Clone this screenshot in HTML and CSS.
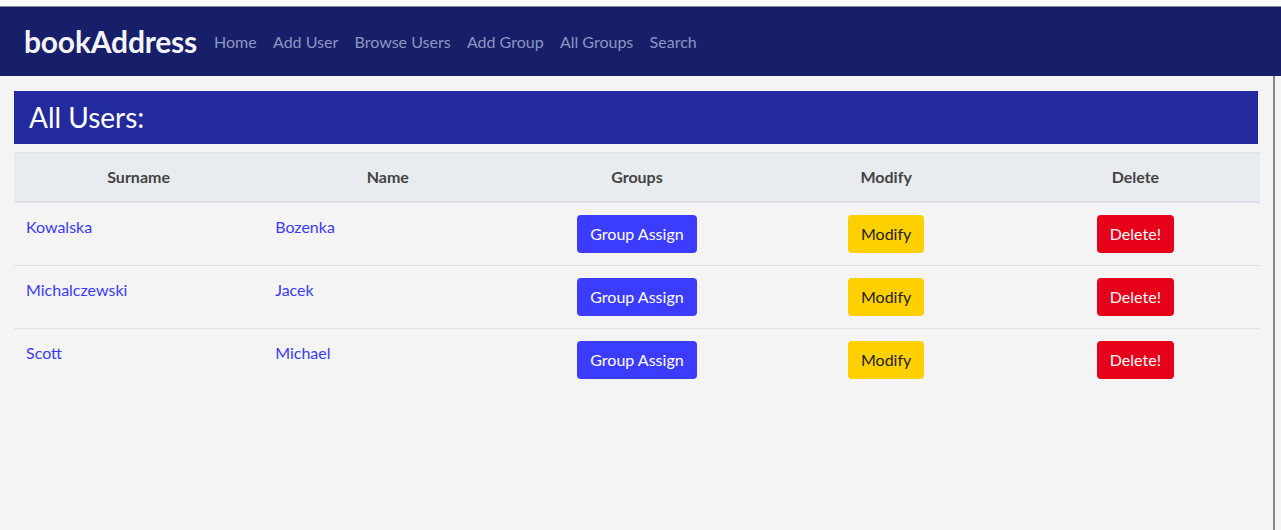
FILE: index.html
```html
<!DOCTYPE html>
<html>
<head>
<meta charset="utf-8">
<link rel="stylesheet" href="styles.css">
</head>
<body>
<div class="frame">
  <nav class="navbar">
    <a class="brand" href="#">bookAddress</a>
    <ul class="nav">
      <li><a href="#">Home</a></li>
      <li><a href="#">Add User</a></li>
      <li><a href="#">Browse Users</a></li>
      <li><a href="#">Add Group</a></li>
      <li><a href="#">All Groups</a></li>
      <li><a href="#">Search</a></li>
    </ul>
  </nav>
  <main class="content">
    <h1 class="title">All Users:</h1>
    <table class="users">
      <thead>
        <tr><th>Surname</th><th>Name</th><th>Groups</th><th>Modify</th><th>Delete</th></tr>
      </thead>
      <tbody>
        <tr>
          <td><a href="#">Kowalska</a></td>
          <td><a href="#">Bozenka</a></td>
          <td class="c"><button class="btn btn-blue">Group Assign</button></td>
          <td class="c"><button class="btn btn-yellow">Modify</button></td>
          <td class="c"><button class="btn btn-red">Delete!</button></td>
        </tr>
        <tr>
          <td><a href="#">Michalczewski</a></td>
          <td><a href="#">Jacek</a></td>
          <td class="c"><button class="btn btn-blue">Group Assign</button></td>
          <td class="c"><button class="btn btn-yellow">Modify</button></td>
          <td class="c"><button class="btn btn-red">Delete!</button></td>
        </tr>
        <tr>
          <td><a href="#">Scott</a></td>
          <td><a href="#">Michael</a></td>
          <td class="c"><button class="btn btn-blue">Group Assign</button></td>
          <td class="c"><button class="btn btn-yellow">Modify</button></td>
          <td class="c"><button class="btn btn-red">Delete!</button></td>
        </tr>
      </tbody>
    </table>
  </main>
</div>
</body>
</html>
```

FILE: styles.css
```css
* { box-sizing: border-box; }
html, body { margin: 0; padding: 0; }
body {
  background: #ffffff;
  font-family: Lato, "Open Sans", sans-serif;
  font-size: 16px;
  line-height: 1.5;
  padding-top: 6px;
  height: 530px;
  overflow: hidden;
}
.frame {
  border-top: 1px solid #8a8a8a;
  background: #f4f4f4;
  min-height: 524px;
  width: 1281px;
}
.navbar {
  background: #161f68;
  height: 69px;
  display: flex;
  align-items: center;
  padding: 0 24px;
}
.brand {
  color: #f4f4f8;
  font-size: 30px;
  font-weight: 700;
  text-decoration: none;
  letter-spacing: -0.2px;
  margin-right: 17px;
  line-height: 1;
  padding-bottom: 2px;
}
.nav {
  list-style: none;
  display: flex;
  margin: 0;
  padding: 0;
  gap: 16.3px;
}
.nav a {
  color: #8e95c3;
  text-decoration: none;
  font-size: 16px;
}
.content {
  width: 1275px;
  border-right: 2px solid #8a8a8a;
  min-height: 455px;
  padding: 15px 15px 0 14px;
}
.title {
  margin: 0 0 8px;
  background: #232a9d;
  color: #ffffff;
  font-size: 28px;
  font-weight: 400;
  line-height: 1.2;
  height: 53px;
  padding: 10px 16px 0 15px;
}
.users {
  width: 1246px;
  border-collapse: collapse;
  table-layout: fixed;
}
.users th {
  background: #e8ebf0;
  color: #444;
  font-weight: 700;
  text-align: center;
  padding: 12px 12px 12px;
  line-height: 24px;
  border-top: 1px solid #dee2e6;
  border-bottom: 2px solid #dee2e6;
}
.users td {
  padding: 12px;
  vertical-align: top;
  border-bottom: 1px solid #dee2e6;
}
.users tbody tr:last-child td { border-bottom: none; }
.users td.c { text-align: center; }
.users a {
  color: #3b3bf5;
  text-decoration: none;
}
.btn {
  font-family: inherit;
  font-size: 16px;
  line-height: 24px;
  padding: 6px 12px;
  border: 1px solid transparent;
  border-radius: 4px;
  cursor: pointer;
}
.btn-blue { background: #3c3cff; color: #fff; }
.btn-yellow { background: #ffd000; color: #222; }
.btn-red { background: #e60019; color: #fff; }
```
